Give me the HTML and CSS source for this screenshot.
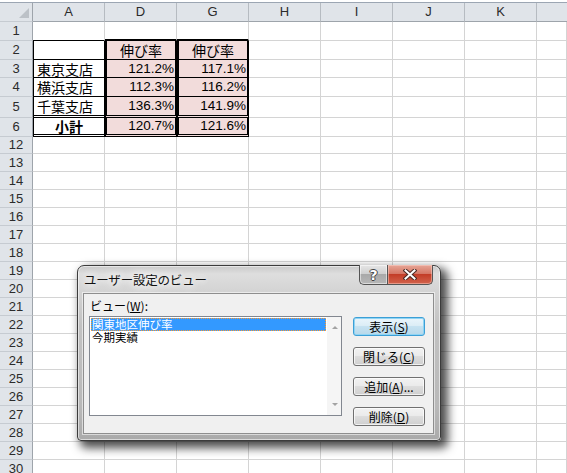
FILE: index.html
```html
<!DOCTYPE html>
<html lang="ja">
<head>
<meta charset="utf-8">
<title>Excel</title>
<link rel="stylesheet" href="styles.css">
</head>
<body>
<div class="app">
  <div class="topband"></div>
  <div class="sheet">
    <div class="r hdr"><span class="rh corner"><i class="tri"></i></span><span class="ch">A</span><span class="ch">D</span><span class="ch">G</span><span class="ch">H</span><span class="ch">I</span><span class="ch">J</span><span class="ch">K</span><span class="ch last"></span></div>
    <div class="r h19"><span class="rh">1</span><span class="b-a1"></span><span class="b-d1"></span><span class="b-d1"></span><span></span><span></span><span></span><span></span><span></span></div>
    <div class="r h19"><span class="rh">2</span><span class="ta"></span><span class="td ctr">伸び率</span><span class="td ctr">伸び率</span><span></span><span></span><span></span><span></span><span></span></div>
    <div class="r h18"><span class="rh">3</span><span class="ta">東京支店</span><span class="td num">121.2%</span><span class="td num">117.1%</span><span></span><span></span><span></span><span></span><span></span></div>
    <div class="r h19"><span class="rh">4</span><span class="ta">横浜支店</span><span class="td num">112.3%</span><span class="td num">116.2%</span><span></span><span></span><span></span><span></span><span></span></div>
    <div class="r h21"><span class="rh">5</span><span class="ta dbl">千葉支店</span><span class="td num dbl">136.3%</span><span class="td num dbl">141.9%</span><span></span><span></span><span></span><span></span><span></span></div>
    <div class="r h19"><span class="rh">6</span><span class="ta dbl ctr bold">小計</span><span class="td num dbl">120.7%</span><span class="td num dbl">121.6%</span><span></span><span></span><span></span><span></span><span></span></div>
    <div class="r h17"><span class="rh">12</span><span></span><span></span><span></span><span></span><span></span><span></span><span></span><span></span></div>
    <div class="r"><span class="rh">13</span><span></span><span></span><span></span><span></span><span></span><span></span><span></span><span></span></div>
    <div class="r"><span class="rh">14</span><span></span><span></span><span></span><span></span><span></span><span></span><span></span><span></span></div>
    <div class="r"><span class="rh">15</span><span></span><span></span><span></span><span></span><span></span><span></span><span></span><span></span></div>
    <div class="r"><span class="rh">16</span><span></span><span></span><span></span><span></span><span></span><span></span><span></span><span></span></div>
    <div class="r"><span class="rh">17</span><span></span><span></span><span></span><span></span><span></span><span></span><span></span><span></span></div>
    <div class="r"><span class="rh">18</span><span></span><span></span><span></span><span></span><span></span><span></span><span></span><span></span></div>
    <div class="r"><span class="rh">19</span><span></span><span></span><span></span><span></span><span></span><span></span><span></span><span></span></div>
    <div class="r"><span class="rh">20</span><span></span><span></span><span></span><span></span><span></span><span></span><span></span><span></span></div>
    <div class="r"><span class="rh">21</span><span></span><span></span><span></span><span></span><span></span><span></span><span></span><span></span></div>
    <div class="r"><span class="rh">22</span><span></span><span></span><span></span><span></span><span></span><span></span><span></span><span></span></div>
    <div class="r"><span class="rh">23</span><span></span><span></span><span></span><span></span><span></span><span></span><span></span><span></span></div>
    <div class="r"><span class="rh">24</span><span></span><span></span><span></span><span></span><span></span><span></span><span></span><span></span></div>
    <div class="r"><span class="rh">25</span><span></span><span></span><span></span><span></span><span></span><span></span><span></span><span></span></div>
    <div class="r"><span class="rh">26</span><span></span><span></span><span></span><span></span><span></span><span></span><span></span><span></span></div>
    <div class="r"><span class="rh">27</span><span></span><span></span><span></span><span></span><span></span><span></span><span></span><span></span></div>
    <div class="r"><span class="rh">28</span><span></span><span></span><span></span><span></span><span></span><span></span><span></span><span></span></div>
    <div class="r"><span class="rh">29</span><span></span><span></span><span></span><span></span><span></span><span></span><span></span><span></span></div>
    <div class="r"><span class="rh">30</span><span></span><span></span><span></span><span></span><span></span><span></span><span></span><span></span></div>
  </div>

  <div class="dialog">
    <div class="titlebar">
      <span class="title">ユーザー設定のビュー</span>
    </div>
    <div class="capbtns">
      <div class="cap help">?</div>
      <div class="cap close">
        <svg width="14" height="11" viewBox="0 0 14 11"><path d="M2.5 1.5 L11.5 9.5 M11.5 1.5 L2.5 9.5" stroke="#4a2a24" stroke-width="4" stroke-linecap="square"/><path d="M2.5 1.5 L11.5 9.5 M11.5 1.5 L2.5 9.5" stroke="#ffffff" stroke-width="2" stroke-linecap="square"/></svg>
      </div>
    </div>
    <div class="panel">
      <div class="label">ビュー(<u>W</u>):</div>
      <div class="body">
        <div class="listbox">
          <div class="items">
            <div class="item sel">関東地区伸び率</div>
            <div class="item">今期実績</div>
          </div>
          <div class="vscroll">
            <span class="arrow up"></span>
            <span class="arrow down"></span>
          </div>
        </div>
        <div class="buttons">
          <div class="btn default">表示(<u>S</u>)</div>
          <div class="btn">閉じる(<u>C</u>)</div>
          <div class="btn">追加(<u>A</u>)...</div>
          <div class="btn">削除(<u>D</u>)</div>
        </div>
      </div>
    </div>
  </div>
</div>
</body>
</html>
```

FILE: styles.css
```css
html, body {
  margin: 0;
  padding: 0;
  background: #ffffff;
  overflow: hidden;
}

.app {
  position: relative;
  width: 567px;
  height: 473px;
  overflow: hidden;
  font-family: "Noto Sans CJK JP", "Noto Sans", sans-serif;
}

.topband {
  height: 2px;
  background: #ffffff;
  border-bottom: 1px solid #9ca6b3;
}

.sheet {
  display: flex;
  flex-direction: column;
}

.r {
  display: grid;
  grid-template-columns: 33px repeat(7, 72px) 1fr;
  height: 18px;
}
.r.h17 { height: 17px; }
.r.h19 { height: 19px; }
.r.h21 { height: 21px; }
.r.hdr { height: 19px; }

.r > span {
  box-sizing: border-box;
  border-right: 1px solid #d4d4d4;
  border-bottom: 1px solid #d4d4d4;
  display: flex;
  align-items: center;
  white-space: nowrap;
  color: #000;
  line-height: 14px;
  min-width: 0;
}

.r > span.rh {
  background: #e0e4e9;
  border-right: 1px solid #9ea4ab;
  border-bottom: 1px solid #c6cbd1;
  justify-content: center;
  font-family: "Liberation Sans", "DejaVu Sans", sans-serif;
  font-size: 13px;
  color: #2b2b2b;
}

.r > span.ch {
  background: #e0e4e9;
  border-right: 1px solid #b6bbc1;
  border-bottom: 1px solid #9ea4ab;
  justify-content: center;
  font-family: "Liberation Sans", "DejaVu Sans", sans-serif;
  font-size: 13px;
  color: #2b2b2b;
}
.r > span.ch.last { border-right: none; }

.corner { position: relative; }
.tri {
  position: absolute;
  right: 3px;
  bottom: 3px;
  width: 0;
  height: 0;
  border-left: 10px solid transparent;
  border-bottom: 10px solid #bcc1c7;
}

/* table borders */
.r > span.b-a1 { border-bottom: 1px solid #000; }
.r > span.b-d1 { border-bottom: 2px solid #000; }

.r > span.ta {
  border-left: 1px solid #000;
  border-right: 1px solid #000;
  border-bottom: 1px solid #000;
  font-size: 14px;
  padding-left: 3px;
}

.r > span.td {
  background: #f2dcdb;
  border-left: 2px solid #000;
  border-right: 2px solid #000;
  border-bottom: 1px solid #000;
  font-size: 14px;
}

.r > span.num {
  justify-content: flex-end;
  padding-right: 1px;
  font-family: "Liberation Sans", "DejaVu Sans", sans-serif;
  font-size: 13.5px;
}

.r > span.ctr {
  justify-content: center;
  padding-left: 0;
}

.r > span.bold { font-weight: bold; }

.r > span.dbl { border-bottom: 3px double #000; }

/* dialog */
.dialog {
  position: absolute;
  left: 77px;
  top: 265px;
  width: 364px;
  height: 176px;
  box-sizing: border-box;
  border: 1px solid #3b3b3b;
  border-radius: 7px 7px 4px 4px;
  background: linear-gradient(180deg, #c9c9c9 0px, #dedede 8px, #d3d3d3 26px, #c2c2c2 60px, #b9b9b9 140px, #a9a9a9 176px);
  box-shadow: inset 0 0 0 1px rgba(255,255,255,0.55), 5px 5px 10px 2px rgba(0,0,0,0.7);
  padding: 0 6px 6px 5px;
  display: flex;
  flex-direction: column;
}

.titlebar {
  height: 27px;
  display: flex;
  align-items: center;
  padding-left: 1px;
  flex: none;
}

.title {
  font-size: 12.5px;
  color: #111;
  text-shadow: 0 0 6px #ffffff, 0 0 10px #ffffff, 0 0 14px #f4f4f4;
  letter-spacing: -0.2px;
}

.capbtns {
  position: absolute;
  top: -1px;
  right: 7px;
  display: flex;
}

.cap {
  box-sizing: border-box;
  height: 20px;
  border: 1px solid #555;
  border-top: none;
  display: flex;
  align-items: center;
  justify-content: center;
}

.help {
  width: 28px;
  border-right: none;
  border-radius: 0 0 0 5px;
  background: linear-gradient(180deg, #e6e6e6 0%, #d0d0d0 45%, #a9a9a9 50%, #b7b7b7 100%);
  box-shadow: inset 0 0 0 1px rgba(255,255,255,0.5);
  font-family: "DejaVu Sans", sans-serif;
  font-weight: bold;
  font-size: 14px;
  color: #fff;
  text-shadow: -1px 0 #444, 1px 0 #444, 0 -1px #444, 0 1px #444;
}

.close {
  width: 46px;
  border-radius: 0 0 5px 0;
  background: linear-gradient(180deg, #e7a697 0%, #d57866 45%, #c33d27 50%, #d2634c 100%);
  box-shadow: inset 0 0 0 1px rgba(255,220,210,0.45);
}

.panel {
  flex: 1;
  background: #f0f0f0;
  border: 1px solid #8e8e8e;
  box-shadow: 0 0 0 1px rgba(255,255,255,0.55);
  padding: 5px 0 0 5px;
  display: flex;
  flex-direction: column;
}

.label {
  font-size: 12px;
  line-height: 14px;
  height: 14px;
  color: #000;
  padding-left: 1px;
}

.body {
  margin-top: 3px;
  display: flex;
  align-items: flex-start;
}

.listbox {
  box-sizing: border-box;
  width: 253px;
  height: 100px;
  border: 1px solid #828790;
  background: #fff;
  display: flex;
  padding: 1px 0 0 1px;
}

.items {
  width: 235px;
  display: flex;
  flex-direction: column;
}

.item {
  box-sizing: border-box;
  height: 13px;
  line-height: 12px;
  font-size: 11.5px;
  padding-left: 1px;
  color: #000;
  white-space: nowrap;
}

.item.sel {
  background: #3399ff;
  color: #fff;
  border: 1px dotted #ff9b30;
  padding-left: 0;
  line-height: 11px;
}

.vscroll {
  flex: 1;
  margin-top: -1px;
  margin-left: 1px;
  background: #f5f5f5;
  position: relative;
}

.arrow {
  position: absolute;
  left: 5px;
  width: 0;
  height: 0;
  border-left: 3px solid transparent;
  border-right: 3px solid transparent;
}
.arrow.up {
  top: 9px;
  border-bottom: 3px solid #a3a3a3;
}
.arrow.down {
  bottom: 9px;
  border-top: 3px solid #a3a3a3;
}

.buttons {
  margin-left: 11px;
  margin-top: 1px;
  display: flex;
  flex-direction: column;
  gap: 11px;
}

.btn {
  box-sizing: border-box;
  width: 72px;
  height: 19px;
  border: 1px solid #707070;
  border-radius: 3px;
  background: linear-gradient(180deg, #f2f2f2 0%, #ebebeb 45%, #dddddd 50%, #cfcfcf 100%);
  box-shadow: inset 0 0 0 1px rgba(255,255,255,0.7);
  font-size: 12px;
  line-height: 17px;
  text-align: center;
  color: #000;
  white-space: nowrap;
}

.btn.default {
  border-color: #3c9fd6;
  background: linear-gradient(180deg, #eaf5fb 0%, #dcedf6 45%, #c6e2f1 50%, #b7d8ea 100%);
  box-shadow: inset 0 0 0 1px #8fd4f4;
}

u { text-decoration: underline; text-underline-offset: 1px; }
```
